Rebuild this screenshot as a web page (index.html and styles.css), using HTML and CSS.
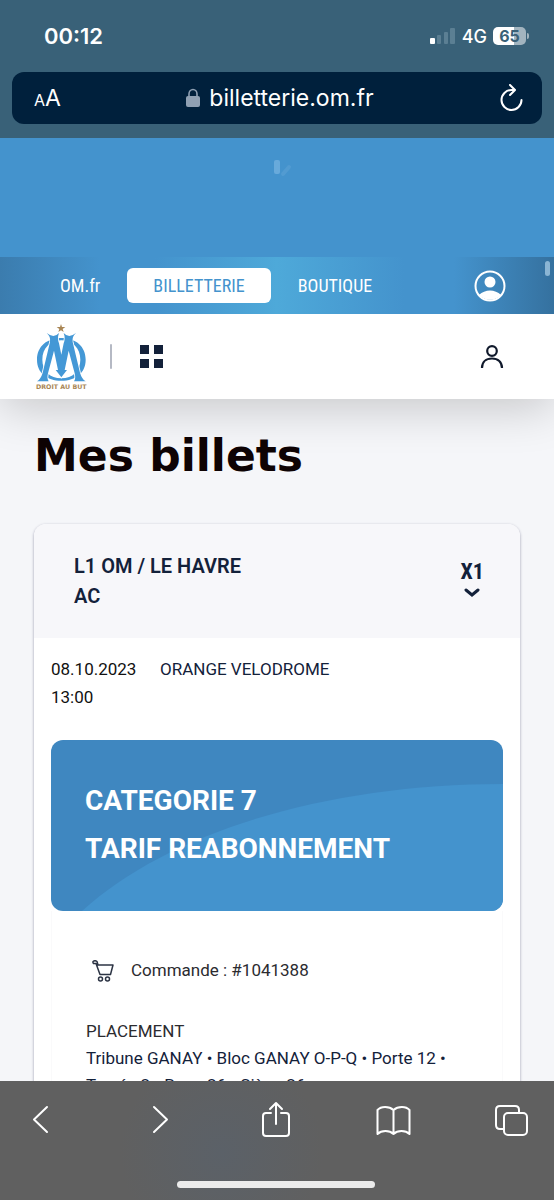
FILE: index.html
```html
<!DOCTYPE html>
<html lang="fr">
<head>
	<meta charset="UTF-8">
	<meta name="viewport" content="width=device-width, initial-scale=1">
	<title>Mes billets</title>
	<link rel="stylesheet" href="styles.css">
</head>
<body>
    <div class="browser_top">
        <div class="status_bar">
            <span class="time">00:12</span>
            <div class="status_icons">
                <svg width="26" height="16" viewBox="0 0 26 16">
                    <rect x="0" y="10" width="5" height="6" rx="1" fill="#fff"/>
                    <rect x="7" y="7" width="4" height="9" rx="1" fill="#5b7f93"/>
                    <rect x="14" y="4" width="4" height="12" rx="1" fill="#5b7f93"/>
                    <rect x="20" y="0" width="5" height="16" rx="1" fill="#5b7f93"/>
                </svg>
                <span class="network">4G</span>
                <span class="battery">65</span>
            </div>
        </div>
        <div class="url_bar">
            <button class="text_size" type="button" aria-label="Taille du texte"><small>A</small>A</button>
            <div class="url">
                <svg width="14" height="20" viewBox="0 0 14 20">
                    <path d="M3 9V6a4 4.500 0 0 1 8 0v3" fill="none" stroke="#8fa0b3" stroke-width="1.600"/>
                    <rect x="0" y="8" width="14" height="11" rx="2" fill="#8fa0b3"/>
                </svg>
                <span>billetterie.om.fr</span>
            </div>
            <button type="button" aria-label="Recharger">
                <svg width="24" height="28" viewBox="0 0 24 28">
                    <path d="M15 6h-2.500A10 10 0 1 0 22.500 16M11 1l5 5-5 5" fill="none" stroke="#fff" stroke-width="2" stroke-linecap="round" stroke-linejoin="round"/>
                </svg>
            </button>
        </div>
    </div>

    <div class="page">
        <div class="pull_refresh">
            <svg width="24" height="20" viewBox="0 0 24 20">
                <rect x="2" y="1" width="6" height="14" rx="2" fill="#68aadb"/>
                <path d="M11 15l6-7" stroke="#529bd1" stroke-width="4" stroke-linecap="round"/>
            </svg>
        </div>
        <nav class="site_nav">
            <a href="#">OM.fr</a>
            <a href="#" class="active">BILLETTERIE</a>
            <a href="#">BOUTIQUE</a>
            <a href="#" class="account" aria-label="Mon compte">
                <svg width="32" height="32" viewBox="0 0 32 32">
                    <circle cx="16" cy="16" r="14.500" fill="none" stroke="#fff" stroke-width="2"/>
                    <circle cx="16" cy="12" r="5.500" fill="#fff"/>
                    <path d="M5 25c3-3 7-4.500 11-4.500S24 22 27 25a15 15 0 0 1-22 0z" fill="#fff"/>
                </svg>
            </a>
        </nav>
        <header class="site_header">
            <a href="#" class="logo" aria-label="Olympique de Marseille">
                <svg width="55" height="68" viewBox="100 251 165 204">
                    <path d="M181 254l3 9h10l-8 6 3 9-8-5-8 5 3-9-8-6h10z" fill="#a98655"/>
                    <path fill="#4498d6" fill-rule="evenodd" d="M182 296c44 0 73 26 73 65s-29 63-73 63-73-24-73-63 29-65 73-65zM182 303c-34 0-57 24-57 58s23 56 57 56 57-22 57-56-23-58-57-58z"/>
                    <path class="logo_m" d="M138 281Q150 290 158 290Q167 290 175 281Q169 297 175 312L182 346L189 312Q195 297 189 281Q197 290 206 290Q214 290 226 281Q213 292 216 308L238 400Q243 418 255 426H220Q226 418 222 402L204 334L192 392H199L182 414L165 392H172L160 334L142 402Q138 418 144 426H109Q121 418 126 400L148 308Q151 292 138 281Z"/>
                    <text class="logo_text" x="182" y="449" text-anchor="middle">DROIT AU BUT</text>
                </svg>
            </a>
            <span class="separator"></span>
            <button type="button" aria-label="Menu">
                <svg width="24" height="24" viewBox="0 0 24 24" fill="#13213a">
                    <path d="M0 0h9v9H0zM14 0h9v9h-9zM0 14h9v9H0zM14 14h9v9h-9z"/>
                </svg>
            </button>
            <button type="button" class="profile" aria-label="Profil">
                <svg width="24" height="24" viewBox="0 0 24 24" fill="none" stroke="#10192b" stroke-width="2.200">
                    <circle cx="12" cy="6" r="4.800"/>
                    <path d="M2 23c0-6 4-9.500 10-9.500S22 17 22 23"/>
                </svg>
            </button>
        </header>

        <main class="content">
            <h1>Mes billets</h1>
            <section class="card">
                <div class="card_head">
                    <h2>L1 OM / LE HAVRE AC</h2>
                    <button type="button" class="quantity">
                        X1
                        <svg width="16" height="10" viewBox="0 0 16 10">
                            <path d="M2 2l6 5 6-5" fill="none" stroke="#13213a" stroke-width="3" stroke-linecap="round"/>
                        </svg>
                    </button>
                </div>
                <div class="card_body">
                    <div class="match_info">
                        <time datetime="2023-10-08T13:00">08.10.2023 13:00</time>
                        <span>ORANGE VELODROME</span>
                    </div>
                    <div class="ticket_banner">
                        <svg class="wave" viewBox="0 0 452 171" preserveAspectRatio="none">
                            <path d="M31 171C120 90 280 44 452 44V171z" fill="#4493cd"/>
                        </svg>
                        <h3>CATEGORIE 7<br>TARIF REABONNEMENT</h3>
                    </div>
                    <div class="ticket_body">
                        <div class="order">
                            <svg width="22" height="22" viewBox="0 0 22 22" fill="none" stroke="#2c3444" stroke-width="1.500" stroke-linejoin="round">
                                <path d="M1 3.500V1.500Q3 0 5 1.500L6 5h15l-2.500 9.500H8L4 3.500H1"/>
                                <circle cx="8.500" cy="19" r="2"/>
                                <circle cx="15.500" cy="19" r="2"/>
                            </svg>
                            <span>Commande : #1041388</span>
                        </div>
                        <p class="label">PLACEMENT</p>
                        <p class="seat">Tribune GANAY • Bloc GANAY O-P-Q • Porte 12 • Travée 2 • Rang 26 • Siège 26</p>
                    </div>
                </div>
            </section>
        </main>
        <span class="scroll_thumb"></span>
    </div>

    <div class="browser_bottom">
        <div class="toolbar">
            <button type="button" aria-label="Précédent">
                <svg width="36" height="36" viewBox="0 0 36 36"><path d="M25 6L12 18.500 25 31"/></svg>
            </button>
            <button type="button" aria-label="Suivant">
                <svg width="36" height="36" viewBox="0 0 36 36"><path d="M14 6l13 12.500L14 31"/></svg>
            </button>
            <button type="button" aria-label="Partager">
                <svg width="36" height="36" viewBox="0 0 36 36"><path d="M13 12H8q-3 0-3 3v17q0 3 3 3h20q3 0 3-3V15q0-3-3-3h-5M18 23V2M12 8l6-6 6 6"/></svg>
            </button>
            <button type="button" aria-label="Signets">
                <svg width="36" height="36" viewBox="0 0 36 36"><path d="M17.500 9C13 5 5 5 1.500 9v24c4-4 12-4 16 0 4-4 12-4 16 0V9c-3.500-4-11.500-4-16 0zM17.500 9v24"/></svg>
            </button>
            <button type="button" aria-label="Onglets">
                <svg width="36" height="36" viewBox="0 0 36 36"><rect x="10" y="12" width="23" height="22" rx="4"/><path d="M10 28H6q-4 0-4-4V9q0-4 4-4h15q4 0 4 4v3"/></svg>
            </button>
        </div>
        <div class="home_bar"></div>
    </div>
</body>
</html>
```
FILE: styles.css
```css
*{
    box-sizing: border-box;
}
body{
    margin: 0;
    height: 100vh;
    display: flex;
    flex-direction: column;
    overflow: hidden;
    font-family: Roboto, "Liberation Sans", sans-serif;
    color: #13213a;
    background: #f5f6f9;
}
button{
    border: 0;
    padding: 0;
    background: none;
    color: inherit;
    font: inherit;
    display: flex;
    align-items: center;
}
a{
    color: inherit;
    text-decoration: none;
}
h1, h2, h3, p{
    margin: 0;
}
svg{
    display: block;
}
.browser_top{
    flex: none;
    padding: 0 12px 14px;
    background: #396178;
    color: #fff;
    font-family: Inter, "Liberation Sans", sans-serif;
}
.status_bar{
    height: 72px;
    padding: 0 16px 0 32px;
    display: flex;
    align-items: center;
    justify-content: space-between;
}
.time{
    font-size: 22px;
    font-weight: 600;
}
.status_icons{
    display: flex;
    align-items: center;
    gap: 6px;
}
.network{
    font-size: 18px;
    font-weight: 500;
}
.battery{
    width: 33px;
    height: 18px;
    border-radius: 5px;
    background: linear-gradient(90deg, #fff 65%, #a2b4bf 65%);
    color: #396178;
    font-size: 16px;
    line-height: 18px;
    font-weight: 700;
    text-align: center;
    position: relative;
}
.battery::after{
    content: "";
    position: absolute;
    left: 34px;
    top: 6px;
    width: 2px;
    height: 6px;
    border-radius: 0 2px 2px 0;
    background: #a2b4bf;
}
.url_bar{
    height: 52px;
    padding: 0 19px 0 22px;
    display: flex;
    align-items: center;
    justify-content: space-between;
    border-radius: 12px;
    background: #00203c;
}
.text_size{
    align-items: baseline;
    font-size: 23px;
}
.text_size small{
    font-size: 16px;
}
.url{
    display: flex;
    align-items: center;
    gap: 9px;
    font-size: 23px;
}
.page{
    flex: 1;
    min-height: 0;
    overflow: hidden;
    position: relative;
}
.pull_refresh{
    height: 119px;
    padding: 21px 0 0 14px;
    display: flex;
    justify-content: center;
    background: #4493cd;
    position: relative;
    z-index: 1;
}
.site_nav{
    height: 57px;
    padding: 0 48px 0 60px;
    display: flex;
    align-items: center;
    gap: 27px;
    color: #fff;
    font-family: "Roboto Condensed", Roboto, sans-serif;
    font-size: 18px;
    background: linear-gradient(90deg, #3b7cae, #4493cd 18%, #4493cd 28%, #4ea9d9 50%, #4493cd 73%, #4493cd 82%, #35719f);
    position: relative;
    z-index: 1;
}
.site_nav .active{
    padding: 0 26px;
    line-height: 35px;
    border-radius: 6px;
    background: #fff;
    color: #4493cd;
}
.account{
    margin-left: auto;
}
.site_header{
    height: 85px;
    padding: 0 50px 0 34px;
    display: flex;
    align-items: center;
    background: #fff;
    box-shadow: 0 8px 48px rgba(0,0,0,.2);
    position: relative;
}
.logo_m{
    fill: #4498d6;
    stroke: #fff;
    stroke-width: 5;
    paint-order: stroke;
}
.logo_text{
    font-family: "DejaVu Sans", sans-serif;
    font-size: 19px;
    font-weight: 700;
    fill: #a98655;
}
.separator{
    width: 2px;
    height: 25px;
    margin: 0 28px 0 21px;
    background: #b5b9c4;
    border-radius: 2px;
}
.profile{
    margin-left: auto;
}
.content{
    padding: 32px 34px 0;
}
h1{
    font-family: "DejaVu Sans", sans-serif;
    font-size: 44px;
    line-height: 50px;
    font-weight: 700;
    color: #0e0304;
}
.card{
    margin-top: 43px;
    border-radius: 12px;
    background: #fff;
    box-shadow: 0 1px 3px rgba(20,20,70,.4);
    overflow: hidden;
}
.card_head{
    height: 114px;
    padding: 0 36px 0 40px;
    display: flex;
    align-items: center;
    justify-content: space-between;
    background: #f7f7fa;
}
h2{
    max-width: 190px;
    font-size: 20px;
    line-height: 30px;
    font-weight: 600;
}
.quantity{
    padding-bottom: 6px;
    flex-direction: column;
    gap: 4px;
    font-family: "Roboto Condensed", Roboto, sans-serif;
    font-size: 22px;
    font-weight: 700;
}
.card_body{
    padding: 17px 17px 0;
}
.match_info{
    display: flex;
    gap: 22px;
    font-size: 17px;
    line-height: 28px;
}
.match_info time{
    width: 87px;
    color: #111;
}
.ticket_banner{
    margin-top: 29px;
    padding: 37px 34px 38px;
    border-radius: 12px;
    background: #3f87c0;
    color: #fff;
    position: relative;
    overflow: hidden;
}
.wave{
    position: absolute;
    left: 0;
    top: 0;
    width: 100%;
    height: 100%;
}
h3{
    position: relative;
    font-size: 28px;
    line-height: 48px;
    font-weight: 700;
}
.ticket_body{
    padding: 46px 34px;
    border: 1px solid #fafafb;
    border-top: 0;
    font-size: 17px;
    line-height: 27px;
}
.order{
    padding-left: 6px;
    margin-bottom: 34px;
    display: flex;
    align-items: center;
    gap: 17px;
    color: #2b2b2f;
}
.label{
    color: #2b2b2f;
}
.scroll_thumb{
    position: absolute;
    z-index: 2;
    right: 4px;
    top: 123px;
    width: 5px;
    height: 15px;
    border-radius: 3px;
    background: #8ab5d4;
}
.browser_bottom{
    flex: none;
    height: 119px;
    padding: 20px 24px 12px 22px;
    display: flex;
    flex-direction: column;
    justify-content: space-between;
    background: radial-gradient(circle at 40% 60%, #5b6168, #606060 30%);
    position: relative;
}
.toolbar{
    display: flex;
    justify-content: space-between;
}
.toolbar svg{
    fill: none;
    stroke: #fff;
    stroke-width: 2;
    stroke-linecap: round;
    stroke-linejoin: round;
}
.home_bar{
    width: 39%;
    height: 7px;
    margin: 0 auto;
    border-radius: 4px;
    background: #ebebeb;
}
```
